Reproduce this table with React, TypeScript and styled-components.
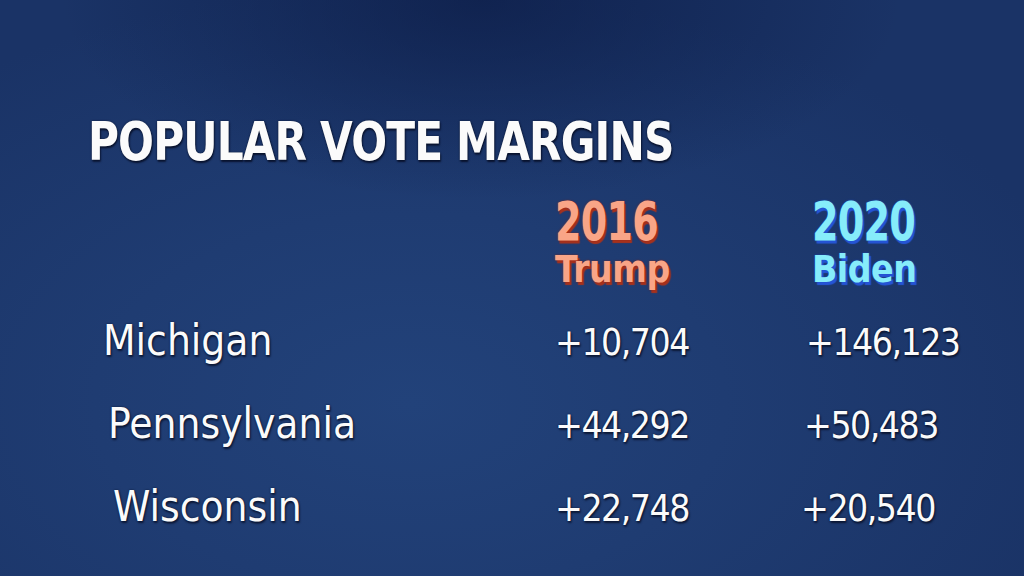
import React, {FC} from "react";
import styled, {createGlobalStyle} from "styled-components";

const GlobalStyle = createGlobalStyle`
html, body {
  margin: 0;
  padding: 0;
  background: #1b3566;
}
`;

type Party = "rep" | "dem";

const rows = [
  {state: "Michigan", shift: 0, demShift: 0, rep: "+10,704", dem: "+146,123"},
  {state: "Pennsylvania", shift: 5, demShift: -2, rep: "+44,292", dem: "+50,483"},
  {state: "Wisconsin", shift: 10, demShift: -5, rep: "+22,748", dem: "+20,540"},
];

const App: FC = () => <Screen>
  <GlobalStyle/>
  <Title>POPULAR VOTE MARGINS</Title>
  <Table>
    <span/>
    <Header party="rep">
      <Year>2016</Year>
      <Name>Trump</Name>
    </Header>
    <Header party="dem">
      <Year>2020</Year>
      <Name>Biden</Name>
    </Header>
    {rows.map(r => <React.Fragment key={r.state}>
      <State shift={r.shift}>{r.state}</State>
      <Margin shift={0}>{r.rep}</Margin>
      <Margin shift={r.demShift}>{r.dem}</Margin>
    </React.Fragment>)}
  </Table>
</Screen>;
export default App;

const Screen = styled.div`
width: 1024px;
height: 576px;
box-sizing: border-box;
padding: 112px 0 0 88px;
overflow: hidden;
font-family: "DejaVu Sans Condensed", "DejaVu Sans", sans-serif;
color: #fbfbfb;
background:
  radial-gradient(ellipse 420px 200px at 47% 0%, rgba(12, 28, 70, 0.7), rgba(12, 28, 70, 0) 100%),
  radial-gradient(ellipse 700px 420px at 40% 70%, #22427a 0%, #1f3c72 45%, #1a3366 100%);
`;

const Title = styled.h1`
margin: 0;
font-size: 54px;
line-height: 60px;
font-weight: bold;
letter-spacing: -1px;
transform: scaleX(0.87);
transform-origin: left center;
white-space: nowrap;
text-shadow: 0 0 2px #0a1530, 1px 2px 2px rgba(5, 10, 30, 0.8);
`;

const Table = styled.div`
display: grid;
grid-template-columns: 452px 251px auto;
margin: 21px 0 0 15px;
align-items: baseline;
`;

const Header = styled.div<{party: Party}>`
display: flex;
flex-direction: column;
align-items: flex-start;
padding-left: ${p => p.party === "dem" ? 6 : 0}px;
font-weight: bold;
color: ${p => p.party === "rep" ? "#f9a587" : "#86ecfa"};
text-shadow: ${p => p.party === "rep"
  ? "0 0 2px #8c2415, 2px 3px 1px #a8321d"
  : "0 0 2px #1c48c4, 2px 3px 1px #2656d8"};
margin-bottom: 11px;
`;

const Year = styled.span`
display: inline-block;
font-size: 53px;
line-height: 58px;
letter-spacing: -1px;
transform: scaleX(0.8);
transform-origin: left center;
`;

const Name = styled.span`
font-size: 37px;
line-height: 38px;
letter-spacing: -0.5px;
`;

const State = styled.div<{shift: number}>`
padding-left: ${p => p.shift}px;
font-size: 42px;
line-height: 81px;
text-shadow: 0 0 2px #0a1530, 1px 2px 2px rgba(5, 10, 30, 0.7);
`;

const Margin = styled.div<{shift: number}>`
margin-left: ${p => p.shift}px;
font-size: 37px;
line-height: 81px;
letter-spacing: -1.5px;
text-shadow: 0 0 2px #0a1530, 1px 2px 2px rgba(5, 10, 30, 0.7);
`;
